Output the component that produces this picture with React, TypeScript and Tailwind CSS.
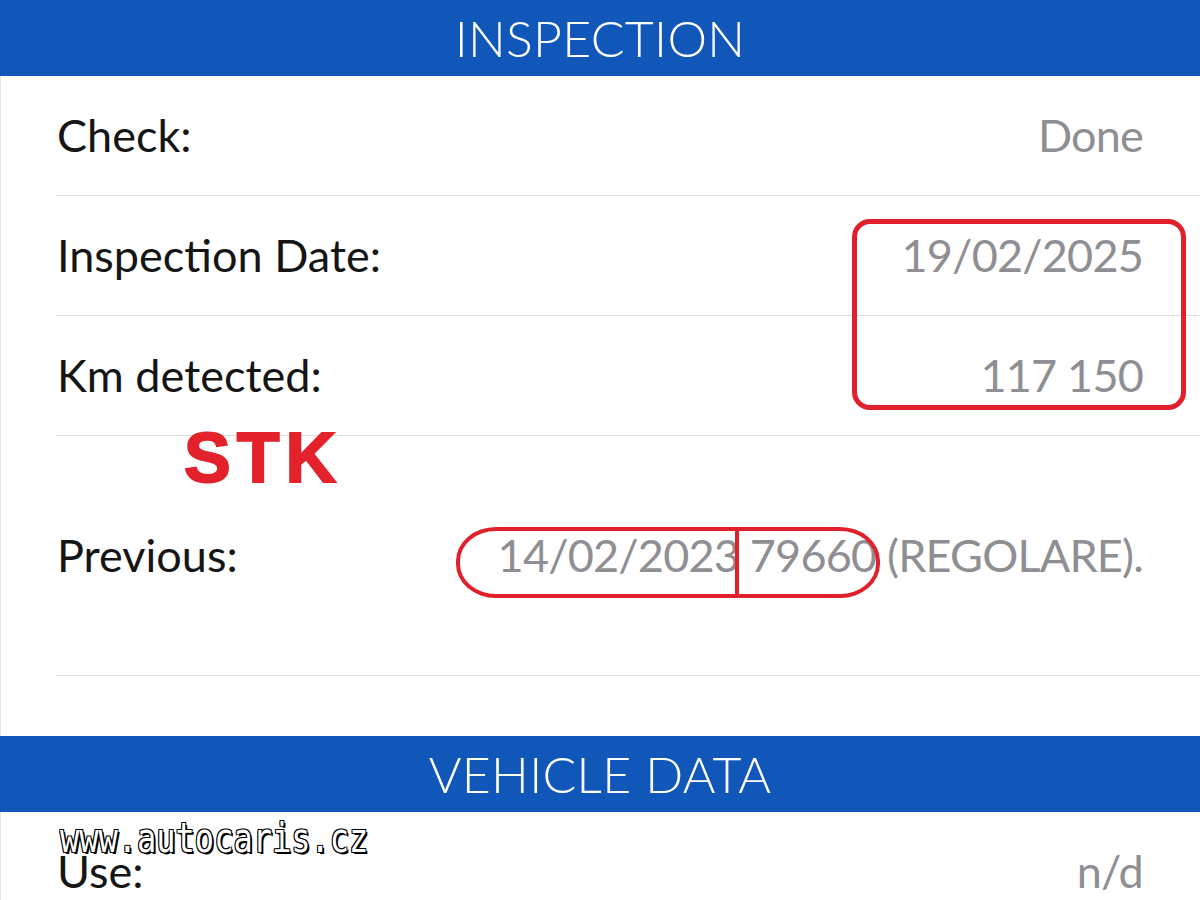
import React from "react";

const FONT = "font-['Lato','Noto_Sans',sans-serif]";

function Row({ label, value, h = "h-[120px]" }: { label: string; value?: React.ReactNode; h?: string }) {
  return (
    <div className={`ml-[55px] ${h} border-b border-[#dedede] flex items-center justify-between pl-[1px] pr-[57px]`}>
      <span className="text-[45px] text-[#151515] leading-none">{label}</span>
      {value !== undefined && (
        <span className="text-[45px] tracking-[-0.8px] text-[#8f8f93] leading-none">{value}</span>
      )}
    </div>
  );
}

function SectionBar({ title }: { title: string }) {
  return (
    <div className="h-[76px] bg-[#1157ba] flex items-center justify-center">
      <span className="text-white text-[50px] font-light leading-none tracking-[0.3px]">{title}</span>
    </div>
  );
}

export default function App() {
  return (
    <div className={`relative w-[1200px] h-[900px] overflow-hidden bg-white ${FONT}`}>
      <SectionBar title="INSPECTION" />
      <div className="border-l border-[#e6e6e6]">
        <Row label="Check:" value="Done" />
        <Row label="Inspection Date:" value="19/02/2025" />
        <Row label="Km detected:" value="117 150" />
        <Row label="Previous:" value="14/02/2023 79660 (REGOLARE)." h="h-[240px]" />
        <div className="h-[60px]" />
      </div>
      <SectionBar title="VEHICLE DATA" />
      <div className="border-l border-[#e6e6e6]">
        <Row label="Use:" value="n/d" />
      </div>

      {/* annotations drawn over the screenshot */}
      <div className="absolute left-[852px] top-[219px] w-[334px] h-[191px] border-[5px] border-[#e0202b] rounded-[18px]" />
      <div className="absolute left-[456px] top-[527px] w-[424px] h-[71px] border-[4px] border-[#e0202b] rounded-[40px/34px]" />
      <div className="absolute left-[735px] top-[529px] w-[4px] h-[67px] bg-[#e0202b]" />
      <div className="absolute left-[184px] top-[423px] text-[70px] leading-none font-bold tracking-[6px] text-[#e3222b] font-['Liberation_Sans',Arial,sans-serif] [-webkit-text-stroke:2px_#e3222b]">
        STK
      </div>
      <div className="absolute left-[60px] top-[826px] origin-bottom scale-y-[1.25] text-[32px] leading-none text-white font-['DejaVu_Sans_Mono',monospace] [text-shadow:2px_2px_0_#000,-1px_-1px_0_#000,1px_-1px_0_#000,-1px_1px_0_#000]">
        www.autocaris.cz
      </div>
    </div>
  );
}
